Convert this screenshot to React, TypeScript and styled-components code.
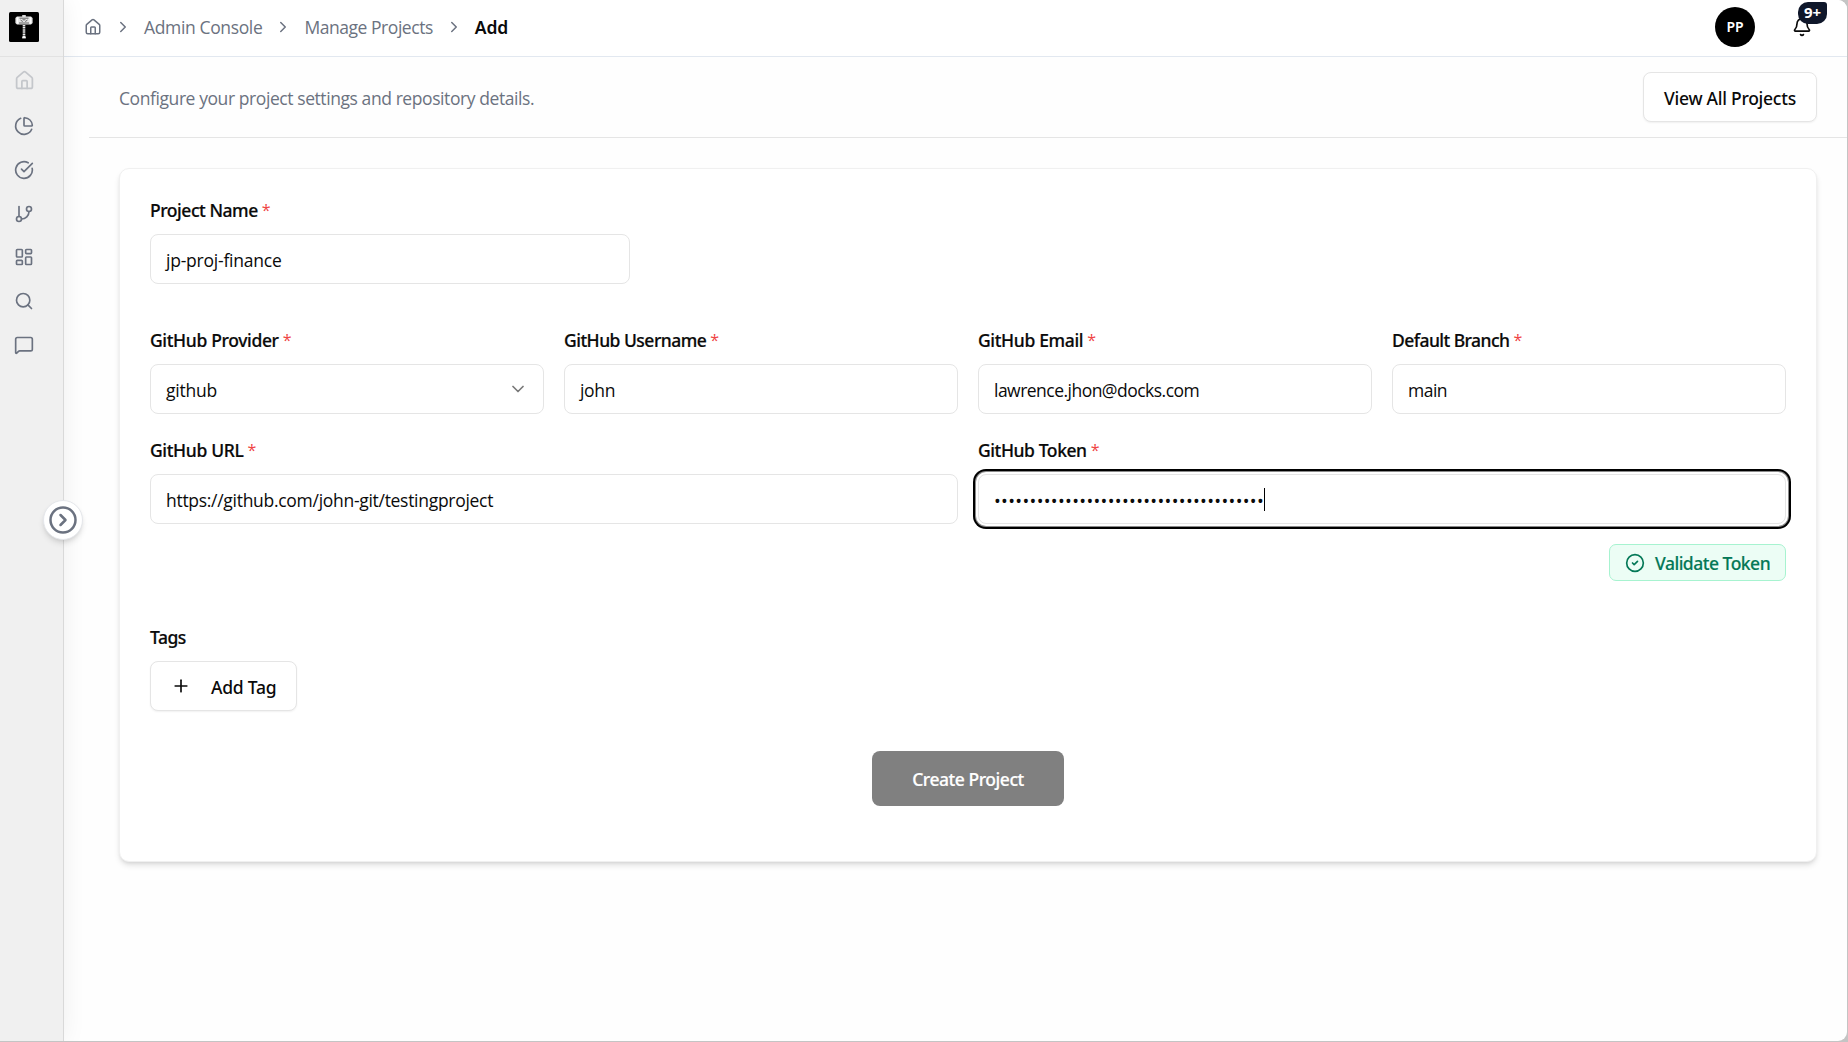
import React from 'react';
import styled, { createGlobalStyle, css } from 'styled-components';
import {
  Bell,
  ChartPie,
  ChevronDown,
  ChevronRight,
  CircleCheck,
  CircleCheckBig,
  CircleChevronRight,
  GitBranch,
  House,
  LayoutDashboard,
  MessageSquare,
  Plus,
  Search,
} from 'lucide-react';

const regular = '"Open Sans", "Noto Sans", sans-serif';
const medium = '"Noto Sans", "Open Sans", sans-serif';

const GlobalStyle = createGlobalStyle`
  *, *::before, *::after { box-sizing: border-box; }
  html, body { margin: 0; padding: 0; }
  body { background: #c4c4c4; font: 400 17.5px/24px ${regular}; color: #0a0a0a; overflow: hidden; }
  svg { display: block; flex: none; }
`;

const Window = styled.div`
  display: flex;
  width: 1847px;
  height: 1041px;
  background: #fefefe;
  border-radius: 0 9px 9px 0;
  overflow: hidden;
`;

const Sidebar = styled.aside`
  position: relative;
  z-index: 2;
  flex: none;
  width: 64px;
  background: #f0f0f0;
  border-right: 1px solid #d9d9d9;
  box-shadow: 0 0 25px rgba(0, 0, 0, 0.065);
`;

const LogoBox = styled.div`
  height: 57px;
  padding: 12px 0 0 9px;
  border-bottom: 1px solid #e2e2e2;
`;

const NavList = styled.nav`
  display: flex;
  flex-direction: column;
  gap: 23.8px;
  padding: 13.3px 0 0 13.5px;
  color: #6b7280;
`;

const NavItem = styled.a<{ $faded?: boolean }>`
  display: flex;
  width: 20px;
  height: 20px;
  ${(p) => p.$faded && css`
    width: 21px;
    height: 22px;
    opacity: 0.32;
  `}
`;

const ExpandButton = styled.button`
  position: absolute;
  top: 500px;
  left: 43px;
  display: flex;
  align-items: center;
  justify-content: center;
  width: 40px;
  height: 40px;
  padding: 0;
  border: 1px solid #e5e7eb;
  border-radius: 50%;
  background: #fff;
  color: #6b7280;
  box-shadow: 0 4px 6px -1px rgba(0, 0, 0, 0.12), 0 2px 4px -2px rgba(0, 0, 0, 0.1);
`;

const Main = styled.main`
  flex: 1;
  min-width: 0;
`;

const Header = styled.header`
  display: flex;
  align-items: center;
  justify-content: space-between;
  height: 57px;
  padding: 0 37px 3px 20px;
  border-bottom: 1px solid #e2e8f0;
  background: #fff;
`;

const Crumbs = styled.div`
  display: flex;
  align-items: center;
  color: #6b7280;

  > svg + svg { margin-left: 12px; }
`;

const Crumb = styled.span<{ $current?: boolean; $ls?: number }>`
  margin: 0 12px 0 12px;
  letter-spacing: ${(p) => p.$ls ?? 0}px;
  ${(p) => p.$current && css`
    font-family: ${medium};
    font-weight: 600;
    color: #0a0a0a;
  `}
`;

const HeaderActions = styled.div`
  display: flex;
  align-items: center;
  gap: 37px;
`;

const Avatar = styled.div`
  display: flex;
  align-items: center;
  justify-content: center;
  width: 40px;
  height: 40px;
  border-radius: 50%;
  background: #000;
  color: #fff;
  font: 600 14px/20px ${medium};
`;

const BellButton = styled.div`
  position: relative;
  width: 18px;
  height: 20px;
`;

const Badge = styled.span`
  position: absolute;
  top: -15px;
  left: 6px;
  width: 29px;
  height: 22px;
  border-radius: 10px 3px 10px 10px;
  background: #0f172a;
  color: #fff;
  font: 700 15px/21px ${medium};
  text-align: center;
`;

const SubHeader = styled.section`
  display: flex;
  align-items: center;
  justify-content: space-between;
  height: 81px;
  margin-left: 25px;
  padding: 0 30px;
  border-bottom: 1px solid #e5e5e5;
`;

const Description = styled.p`
  margin: 2px 0 0;
  color: #6b7280;
  letter-spacing: -0.42px;
`;

const OutlineButton = styled.button<{ $width: number; $ls?: number }>`
  display: flex;
  align-items: center;
  width: ${(p) => p.$width}px;
  height: 50px;
  padding: 1px 20px 0;
  border: 1px solid #e5e5e5;
  border-radius: 8px;
  background: #fff;
  color: #0a0a0a;
  font: 500 17.5px/24px ${medium};
  letter-spacing: ${(p) => p.$ls ?? 0}px;
  white-space: nowrap;
  box-shadow: 0 1px 2px rgba(0, 0, 0, 0.06);

  svg { margin: -1px 20px 0 0; }
`;

const Card = styled.form`
  display: flex;
  flex-direction: column;
  height: 694px;
  margin: 30px 30px 0 55px;
  padding: 30px;
  border: 1px solid #f0f0f0;
  border-radius: 10px;
  background: #fff;
  box-shadow: 0 4px 6px -1px rgba(0, 0, 0, 0.12), 0 2px 4px -2px rgba(0, 0, 0, 0.12);
`;

const FieldGrid = styled.div`
  display: grid;
  grid-template-columns: repeat(4, 1fr);
  gap: 25px 20px;
  margin-top: 45px;
`;

const FieldBox = styled.div<{ $span?: number; $width?: number }>`
  display: flex;
  flex-direction: column;
  gap: 13px;
  min-width: 0;
  grid-column: span ${(p) => p.$span ?? 1};
  ${(p) => p.$width && css`width: ${p.$width}px;`}
`;

const Label = styled.label<{ $ls?: number }>`
  display: flex;
  gap: 4px;
  font: 500 17.5px/22px ${medium};
  letter-spacing: ${(p) => p.$ls ?? 0}px;
  -webkit-text-stroke: 0.2px currentColor;
`;

const Required = styled.span`
  color: #ef4444;
  font: 400 16px/22px ${regular};
  -webkit-text-stroke: 0;
`;

const Control = styled.div<{ $focused?: boolean; $ls?: number }>`
  display: flex;
  align-items: center;
  justify-content: space-between;
  height: 50px;
  padding: 1px 15px 0;
  border: 1px solid #e5e5e5;
  border-radius: 8px;
  background: #fff;
  letter-spacing: ${(p) => p.$ls ?? 0}px;
  ${(p) => p.$focused && css`
    box-shadow: 0 0 0 2px #fff, 0 0 0 3px #8a8a8a, 0 0 0 5px #000;
  `}

  svg { margin: -2px 0 0; opacity: 0.55; }
`;

const Masked = styled.span`
  display: flex;
  align-items: center;
  height: 23px;
  padding-top: 3px;
  border-right: 1px solid #000;
  font-size: 18px;
  letter-spacing: 0.34px;
`;

const ValidateButton = styled.button`
  display: flex;
  align-items: center;
  align-self: flex-end;
  gap: 10px;
  width: 177px;
  height: 37px;
  margin-top: 20px;
  padding: 0 15px;
  border: 1px solid #a7f3d0;
  border-radius: 7px;
  background: #ecfdf5;
  color: #047857;
  font: 500 17.5px/24px ${medium};
  letter-spacing: -0.5px;
  -webkit-text-stroke: 0.15px currentColor;
  white-space: nowrap;
`;

const TagsBlock = styled.div`
  display: flex;
  flex-direction: column;
  gap: 13px;
  margin-top: 45px;
`;

const SubmitButton = styled.button`
  align-self: center;
  width: 192px;
  height: 55px;
  margin-top: 40px;
  padding: 1px 0 0;
  border: 0;
  border-radius: 8px;
  background: #808080;
  color: #fff;
  font: 500 17.5px/24px ${medium};
  letter-spacing: -0.45px;
  -webkit-text-stroke: 0.2px currentColor;
`;

interface FieldProps {
  label: string;
  labelLs?: number;
  value: React.ReactNode;
  ls?: number;
  span?: number;
  width?: number;
  focused?: boolean;
}

const Field = ({ label, labelLs, value, ls, span, width, focused }: FieldProps) => (
  <FieldBox $span={span} $width={width}>
    <Label $ls={labelLs}>
      {label}
      <Required>*</Required>
    </Label>
    <Control $ls={ls} $focused={focused}>
      {value}
    </Control>
  </FieldBox>
);

const HammerLogo = () => (
  <svg width="30" height="30" viewBox="0 0 30 30">
    <rect width="30" height="30" rx="1.5" fill="#000" />
    <rect x="13.2" y="3" width="3.6" height="3" fill="#d8d8d8" />
    <path d="M8 4.5h14l1.6 1.500v5L22 12.500H8l-1.600-1.500V6z" fill="#e6e6e6" />
    <path d="M10.500 6.200h9M10 11h10M11.500 8l2.200 1.600M18.500 8l-2.200 1.600M13.500 7.800h3" stroke="#555" strokeWidth="0.900" />
    <path d="M8.500 5.500v6M21.500 5.500v6" stroke="#fff" strokeWidth="1.300" />
    <path d="M15 13v12" stroke="#ededed" strokeWidth="2.600" strokeDasharray="1.500 0.600" />
    <rect x="13.200" y="24.600" width="3.600" height="1.800" fill="#fff" />
  </svg>
);

export default function App() {
  return (
    <>
      <GlobalStyle />
      <Window>
        <Sidebar>
          <LogoBox>
            <HammerLogo />
          </LogoBox>
          <NavList>
            <NavItem $faded><House size={21} /></NavItem>
            <NavItem><ChartPie size={20} /></NavItem>
            <NavItem><CircleCheckBig size={20} /></NavItem>
            <NavItem><GitBranch size={20} /></NavItem>
            <NavItem><LayoutDashboard size={20} /></NavItem>
            <NavItem><Search size={20} /></NavItem>
            <NavItem><MessageSquare size={20} /></NavItem>
          </NavList>
          <ExpandButton>
            <CircleChevronRight size={30} />
          </ExpandButton>
        </Sidebar>
        <Main>
          <Header>
            <Crumbs>
              <House size={18} />
              <ChevronRight size={18} />
              <Crumb $ls={-0.36}>Admin Console</Crumb>
              <ChevronRight size={18} />
              <Crumb $ls={-0.45}>Manage Projects</Crumb>
              <ChevronRight size={18} />
              <Crumb $current $ls={-0.2}>Add</Crumb>
            </Crumbs>
            <HeaderActions>
              <Avatar>PP</Avatar>
              <BellButton>
                <Bell size={20} />
                <Badge>9+</Badge>
              </BellButton>
            </HeaderActions>
          </Header>
          <SubHeader>
            <Description>Configure your project settings and repository details.</Description>
            <OutlineButton $width={174} $ls={-0.26}>View All Projects</OutlineButton>
          </SubHeader>
          <Card>
            <Field label="Project Name" labelLs={-0.45} value="jp-proj-finance" ls={-0.22} width={480} />
            <FieldGrid>
              <Field
                label="GitHub Provider"
                labelLs={-0.35}
                value={<>github<ChevronDown size={20} /></>}
                ls={-0.2}
              />
              <Field label="GitHub Username" labelLs={-0.52} value="john" ls={-0.35} />
              <Field label="GitHub Email" labelLs={-0.35} value="lawrence.jhon@docks.com" ls={-0.52} />
              <Field label="Default Branch" labelLs={-0.55} value="main" ls={-0.52} />
              <Field
                label="GitHub URL"
                labelLs={-0.35}
                value="https://github.com/john-git/testingproject"
                ls={-0.29}
                span={2}
              />
              <Field
                label="GitHub Token"
                labelLs={-0.42}
                value={<Masked>{'•'.repeat(38)}</Masked>}
                span={2}
                focused
              />
            </FieldGrid>
            <ValidateButton type="button">
              <CircleCheck size={20} />
              <span>Validate Token</span>
            </ValidateButton>
            <TagsBlock>
              <Label $ls={-0.5}>Tags</Label>
              <OutlineButton type="button" $width={147} $ls={-0.25}>
                <Plus size={20} />
                Add Tag
              </OutlineButton>
            </TagsBlock>
            <SubmitButton type="button">Create Project</SubmitButton>
          </Card>
        </Main>
      </Window>
    </>
  );
}
